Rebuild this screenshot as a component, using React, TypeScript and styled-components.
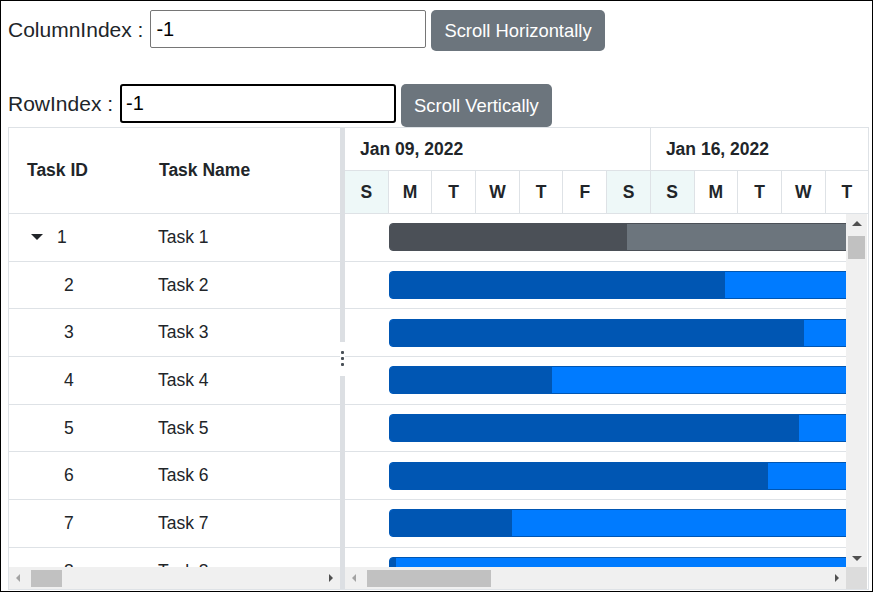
import styled, { createGlobalStyle } from "styled-components";

const GlobalStyle = createGlobalStyle`
  html, body {
    margin: 0;
    padding: 0;
    background: #ffffff;
  }
  body {
    font-family: "Liberation Sans", Arial, sans-serif;
    color: #212529;
  }
`;

interface Task {
    id: number;
    name: string;
    parent?: boolean;
    progress: number;
}

const tasks: Task[] = [
    { id: 1, name: "Task 1", parent: true, progress: 237 },
    { id: 2, name: "Task 2", progress: 335 },
    { id: 3, name: "Task 3", progress: 414 },
    { id: 4, name: "Task 4", progress: 162 },
    { id: 5, name: "Task 5", progress: 409 },
    { id: 6, name: "Task 6", progress: 378 },
    { id: 7, name: "Task 7", progress: 122 },
    { id: 8, name: "Task 8", progress: 6 },
];

const days = ["S", "M", "T", "W", "T", "F", "S", "S", "M", "T", "W", "T"];
const weekend = [0, 6, 7];

const App = () => {
    return (
        <>
            <GlobalStyle />
            <Page>
                <ControlRow $top={0}>
                    <Label>ColumnIndex :</Label>
                    <TextBox $width={276} $height={38} defaultValue="-1" />
                    <ActionButton $height={41}>Scroll Horizontally</ActionButton>
                </ControlRow>
                <ControlRow $top={33}>
                    <Label>RowIndex :</Label>
                    <TextBox $width={276} $height={39} $focused defaultValue="-1" />
                    <ActionButton $height={43}>Scroll Vertically</ActionButton>
                </ControlRow>

                <Gantt>
                    <GridPane>
                        <GridHeader>
                            <IdCell $header>Task ID</IdCell>
                            <NameCell $header>Task Name</NameCell>
                        </GridHeader>
                        <Body>
                            {tasks.map((t) => (
                                <GridRow key={t.id}>
                                    <IdCell $parent={t.parent}>
                                        {t.parent && <Caret />}
                                        {t.id}
                                    </IdCell>
                                    <NameCell>{t.name}</NameCell>
                                </GridRow>
                            ))}
                        </Body>
                        <HScroll>
                            <ArrowLeft $dim />
                            <Track>
                                <HThumb $offset={4} $width={31} />
                            </Track>
                            <ArrowRight />
                        </HScroll>
                    </GridPane>

                    <Splitter>
                        <SplitLine />
                        <Grip>
                            <Dot />
                            <Dot />
                            <Dot />
                        </Grip>
                        <SplitLine />
                    </Splitter>

                    <ChartPane>
                        <Timeline>
                            <TopTier>
                                <WeekCell>Jan 09, 2022</WeekCell>
                                <WeekCell>Jan 16, 2022</WeekCell>
                            </TopTier>
                            <BottomTier>
                                {days.map((d, i) => (
                                    <DayCell key={i} $weekend={weekend.includes(i)}>
                                        {d}
                                    </DayCell>
                                ))}
                            </BottomTier>
                        </Timeline>
                        <ChartBody>
                            <Rows>
                                {tasks.map((t) => (
                                    <ChartRow key={t.id}>
                                        <Bar $parent={t.parent}>
                                            <Progress $parent={t.parent} style={{ width: t.progress }} />
                                        </Bar>
                                    </ChartRow>
                                ))}
                            </Rows>
                            <VScroll>
                                <ArrowUp />
                                <VTrack>
                                    <VThumb />
                                </VTrack>
                                <ArrowDown />
                            </VScroll>
                        </ChartBody>
                        <ChartFooter>
                            <HScroll $grow>
                                <ArrowLeft $dim />
                                <Track>
                                    <HThumb $offset={4} $width={124} />
                                </Track>
                                <ArrowRight />
                            </HScroll>
                            <Corner />
                        </ChartFooter>
                    </ChartPane>
                </Gantt>
            </Page>
        </>
    );
};

const Page = styled.div`
    width: 873px;
    height: 592px;
    box-sizing: border-box;
    border: 1px solid #000000;
    padding: 9px 0 0 7px;
    overflow: hidden;
    background: #ffffff;
`;

const ControlRow = styled.div<{ $top: number }>`
    display: flex;
    align-items: flex-start;
    margin-top: ${(p) => p.$top}px;
`;

const Label = styled.span`
    font-size: 21px;
    line-height: 40px;
    color: #212529;
    margin-right: 7px;
    white-space: nowrap;
`;

const TextBox = styled.input<{ $width: number; $height: number; $focused?: boolean }>`
    box-sizing: border-box;
    width: ${(p) => p.$width}px;
    height: ${(p) => p.$height}px;
    border: ${(p) => (p.$focused ? "2px solid #000000" : "1px solid #767676")};
    border-radius: ${(p) => (p.$focused ? "3px" : "2px")};
    padding: 0 ${(p) => (p.$focused ? "4px" : "5px")};
    font-family: "Liberation Sans", Arial, sans-serif;
    font-size: 20px;
    color: #000000;
    outline: none;
    background: #ffffff;
`;

const ActionButton = styled.button<{ $height: number }>`
    height: ${(p) => p.$height}px;
    margin-left: 5px;
    padding: 0 13px;
    border: none;
    border-radius: 5px;
    background: #6c757d;
    color: #ffffff;
    font-family: "Liberation Sans", Arial, sans-serif;
    font-size: 18.4px;
    white-space: nowrap;
`;

const Gantt = styled.div`
    display: flex;
    width: 861px;
    height: 463px;
    box-sizing: border-box;
    border: 1px solid #dee2e6;
    font-size: 17.5px;
    color: #212529;
`;

const GridPane = styled.div`
    display: flex;
    flex-direction: column;
    width: 331px;
    flex: none;
`;

const GridHeader = styled.div`
    display: flex;
    align-items: center;
    height: 85px;
    border-bottom: 1px solid #dee2e6;
    font-weight: bold;
`;

const Body = styled.div`
    height: 353px;
    overflow: hidden;
    flex: none;
`;

const GridRow = styled.div`
    display: flex;
    align-items: center;
    box-sizing: border-box;
    height: 47.7px;
    border-bottom: 1px solid #dee2e6;
`;

const IdCell = styled.div<{ $header?: boolean; $parent?: boolean }>`
    display: flex;
    align-items: center;
    width: 131px;
    box-sizing: border-box;
    padding-left: ${(p) => (p.$header ? 18 : p.$parent ? 22 : 55)}px;
`;

const NameCell = styled.div<{ $header?: boolean }>`
    flex: 1;
    padding-left: ${(p) => (p.$header ? 19 : 18)}px;
`;

const Caret = styled.span`
    width: 0;
    height: 0;
    border-left: 6px solid transparent;
    border-right: 6px solid transparent;
    border-top: 6px solid #212529;
    margin-right: 14px;
`;

const HScroll = styled.div<{ $grow?: boolean }>`
    display: flex;
    align-items: center;
    height: 22px;
    flex: ${(p) => (p.$grow ? 1 : "none")};
    background: #f0f0f0;
`;

const Track = styled.div`
    flex: 1;
    display: flex;
    align-items: center;
    height: 100%;
`;

const HThumb = styled.div<{ $offset: number; $width: number }>`
    margin-left: ${(p) => p.$offset}px;
    width: ${(p) => p.$width}px;
    height: 17px;
    background: #c1c1c1;
`;

const ArrowBox = styled.div`
    width: 18px;
    height: 100%;
    display: flex;
    align-items: center;
    justify-content: center;
    flex: none;
    &::before {
        content: "";
        width: 0;
        height: 0;
    }
`;

const ArrowLeft = styled(ArrowBox)<{ $dim?: boolean }>`
    &::before {
        border-top: 4px solid transparent;
        border-bottom: 4px solid transparent;
        border-right: 4px solid ${(p) => (p.$dim ? "#a3a3a3" : "#505050")};
    }
`;

const ArrowRight = styled(ArrowBox)`
    &::before {
        border-top: 4px solid transparent;
        border-bottom: 4px solid transparent;
        border-left: 4px solid #505050;
    }
`;

const Splitter = styled.div`
    width: 5px;
    flex: none;
    display: flex;
    flex-direction: column;
`;

const SplitLine = styled.div`
    flex: 1;
    background: #dcdfe3;
`;

const Grip = styled.div`
    height: 34px;
    display: flex;
    flex-direction: column;
    align-items: center;
    justify-content: center;
    gap: 3px;
    background: #ffffff;
`;

const Dot = styled.div`
    width: 3px;
    height: 3px;
    background: #495057;
    border-radius: 1px;
`;

const ChartPane = styled.div`
    flex: 1;
    min-width: 0;
    display: flex;
    flex-direction: column;
    overflow: hidden;
`;

const Timeline = styled.div`
    height: 86px;
    flex: none;
    border-bottom: 1px solid #dee2e6;
    box-sizing: border-box;
    font-weight: bold;
    overflow: hidden;
`;

const TopTier = styled.div`
    display: flex;
    height: 43px;
    border-bottom: 1px solid #dee2e6;
    box-sizing: border-box;
`;

const WeekCell = styled.div`
    flex: none;
    width: 305.9px;
    box-sizing: border-box;
    padding-left: 15px;
    display: flex;
    align-items: center;
    border-right: 1px solid #dee2e6;
`;

const BottomTier = styled.div`
    display: flex;
    height: 42px;
`;

const DayCell = styled.div<{ $weekend?: boolean }>`
    flex: none;
    width: 43.7px;
    box-sizing: border-box;
    display: flex;
    align-items: center;
    justify-content: center;
    border-right: 1px solid #dee2e6;
    background: ${(p) => (p.$weekend ? "#eef8f8" : "#ffffff")};
`;

const ChartBody = styled.div`
    display: flex;
    height: 353px;
    flex: none;
`;

const Rows = styled.div`
    flex: 1;
    overflow: hidden;
`;

const ChartRow = styled.div`
    display: flex;
    align-items: center;
    box-sizing: border-box;
    height: 47.7px;
    padding-left: 44px;
    border-bottom: 1px solid #dee2e6;
`;

const Bar = styled.div<{ $parent?: boolean }>`
    display: flex;
    flex: none;
    width: 600px;
    height: 28px;
    box-sizing: border-box;
    border-radius: 4px;
    overflow: hidden;
    background: ${(p) => (p.$parent ? "#6c757d" : "#007bff")};
    border: 1px solid ${(p) => (p.$parent ? "#4b5057" : "#0056b3")};
`;

const Progress = styled.div<{ $parent?: boolean }>`
    height: 100%;
    background: ${(p) => (p.$parent ? "#4b5057" : "#0056b3")};
`;

const VScroll = styled.div`
    width: 21px;
    flex: none;
    margin-right: 1px;
    display: flex;
    flex-direction: column;
    background: #f0f0f0;
`;

const VTrack = styled.div`
    flex: 1;
    display: flex;
    flex-direction: column;
    align-items: center;
`;

const VThumb = styled.div`
    margin-top: 4px;
    width: 17px;
    height: 23px;
    background: #c1c1c1;
`;

const VArrow = styled.div`
    height: 18px;
    display: flex;
    align-items: center;
    justify-content: center;
    &::before {
        content: "";
        width: 0;
        height: 0;
        border-left: 5px solid transparent;
        border-right: 5px solid transparent;
    }
`;

const ArrowUp = styled(VArrow)`
    &::before {
        border-bottom: 5px solid #505050;
    }
`;

const ArrowDown = styled(VArrow)`
    &::before {
        border-top: 5px solid #505050;
    }
`;

const ChartFooter = styled.div`
    display: flex;
    height: 22px;
    flex: none;
`;

const Corner = styled.div`
    width: 21px;
    margin-right: 1px;
    background: #dcdcdc;
`;

export default App;
